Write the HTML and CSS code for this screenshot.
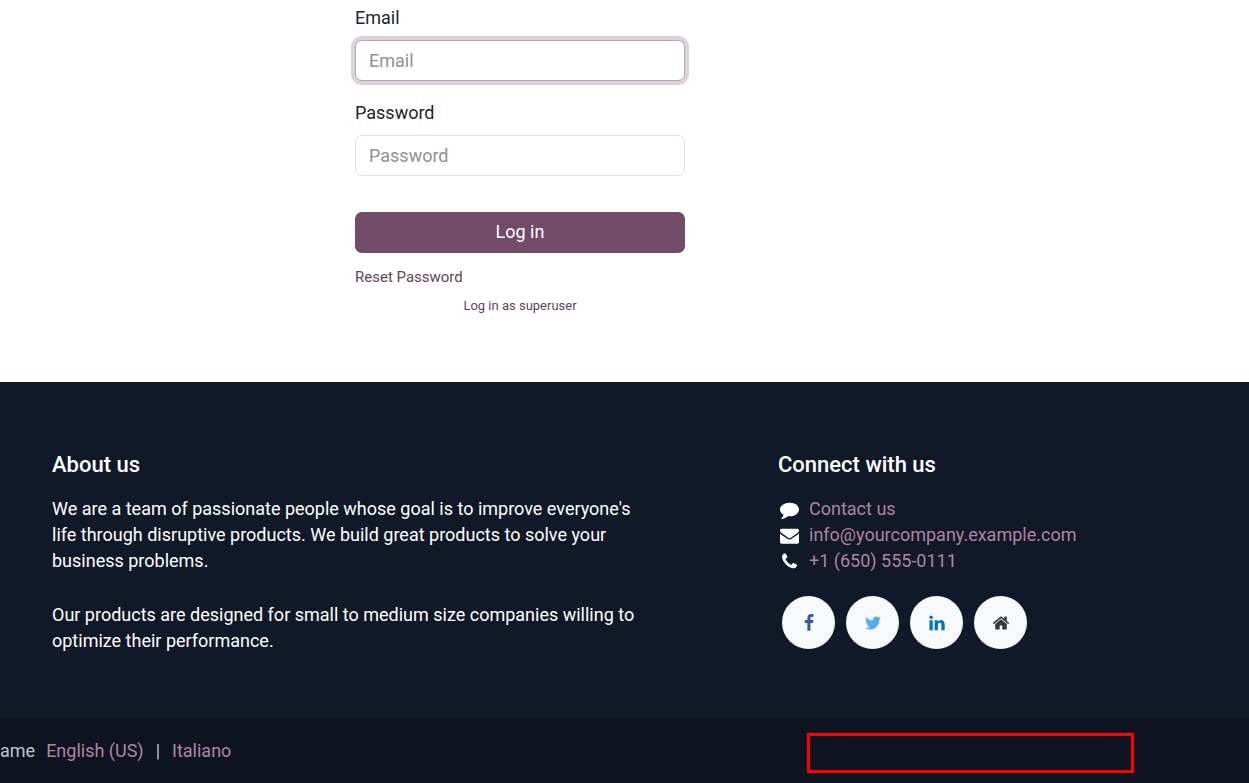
FILE: index.html
```html
<!DOCTYPE html>
<html lang="en">
<head>
<meta charset="utf-8">
<meta name="viewport" content="width=device-width, initial-scale=1">
<title>Login</title>
<link rel="stylesheet" href="styles.css">
</head>
<body>
<main class="login">
  <form class="login-form">
    <div class="field">
      <label for="email">Email</label>
      <input class="control" id="email" type="email" placeholder="Email" autofocus>
    </div>
    <div class="field">
      <label for="password">Password</label>
      <input class="control" id="password" type="password" placeholder="Password">
    </div>
    <button class="submit" type="submit">Log in</button>
    <a class="reset" href="#">Reset Password</a>
    <a class="superuser" href="#">Log in as superuser</a>
  </form>
</main>
<footer class="footer">
  <div class="footer-main">
    <section class="about">
      <h2>About us</h2>
      <p>We are a team of passionate people whose goal is to improve everyone's life through disruptive products. We build great products to solve your business problems.</p>
      <p>Our products are designed for small to medium size companies willing to optimize their performance.</p>
    </section>
    <section class="connect">
      <h2>Connect with us</h2>
      <ul class="contacts">
        <li><svg class="icon" viewBox="0 0 1792 1792" aria-hidden="true"><path d="M1792 896q0 174-120 321.5t-326 233-450 85.5q-70 0-145-8-198 175-460 242-49 14-114 22-17 2-30.5-9t-17.5-29v-1q-3-4-.5-12t2-10 4.5-9.5l6-9 7-8.5 8-9q7-8 31-34.5t34.5-38 31-39.5 32.5-51 27-59 26-76q-157-89-247.5-220t-90.5-281q0-130 71-248.5t191-204.5 286-136.5 348-50.5q244 0 450 85.5t326 233 120 321.5z"/></svg><a href="#">Contact us</a></li>
        <li><svg class="icon" viewBox="0 0 1792 1792" aria-hidden="true"><path d="M1792 710v794q0 66-47 113t-113 47h-1472q-66 0-113-47t-47-113v-794q44 49 101 87 362 246 497 345 57 42 92.5 65.5t94.5 48 110 24.5h2q51 0 110-24.5t94.5-48 92.5-65.5q170-123 498-345 57-39 100-87zm0-294q0 79-49 151t-122 123q-376 261-468 325-10 7-42.5 31t-54 38.5-52 32.5-57.5 27-50 9h-2q-23 0-50-9t-57.5-27-52-32.5-54-38.5-42.5-31q-91-64-262-182.5t-205-142.5q-62-42-117-115.5t-55-136.5q0-78 41.5-130t118.5-52h1472q65 0 112.5 47t47.5 113z"/></svg><a href="#">info@yourcompany.example.com</a></li>
        <li><svg class="icon" viewBox="0 0 1792 1792" aria-hidden="true"><path d="M1600 1240q0 27-10 70.5t-21 68.5q-21 50-122 106-94 51-186 51-27 0-53-3.5t-57.5-12.5-47-14.5-55.5-20.5-49-18q-98-35-175-83-127-79-264-216t-216-264q-48-77-83-175-3-9-18-49t-20.5-55.5-14.5-47-12.5-57.5-3.5-53q0-92 51-186 56-101 106-122 25-11 68.5-21t70.5-10q14 0 21 3 18 6 53 76 11 19 30 54t35 63.5 31 53.5q3 4 17.5 25t21.5 35.5 7 28.5q0 20-28.5 50t-62 55-62 53-28.5 46q0 9 5 22.5t8.5 20.5 14 24 11.5 19q76 137 174 235t235 174q2 1 19 11.5t24 14 20.5 8.5 22.5 5q18 0 46-28.5t53-62 55-62 50-28.5q14 0 28.5 7t35.5 21.5 25 17.5q25 15 53.5 31t63.5 35 54 30q70 35 76 53 3 7 3 21z"/></svg><a href="#">+1 (650) 555-0111</a></li>
      </ul>
      <div class="social">
        <a class="facebook" href="#" aria-label="Facebook"><svg class="icon" viewBox="0 0 1792 1792"><path d="M1343 12v264h-157q-86 0-116 36t-30 108v189h293l-39 296h-254v759h-306v-759h-255v-296h255v-218q0-186 104-288.5t277-102.5q147 0 228 12z"/></svg></a>
        <a class="twitter" href="#" aria-label="Twitter"><svg class="icon" viewBox="0 0 1792 1792"><path d="M1684 408q-67 98-162 167 1 14 1 42 0 130-38 259.5t-115.5 248.5-184.5 210.5-258 146-323 54.5q-271 0-496-145 35 4 78 4 225 0 401-138-105-2-188-64.5t-114-159.5q33 5 61 5 43 0 85-11-112-23-185.5-111.5t-73.5-205.5v-4q68 38 146 41-66-44-105-115t-39-154q0-88 44-163 121 149 294.5 238.5t371.5 99.5q-8-38-8-74 0-134 94.5-228.5t228.5-94.5q140 0 236 102 109-21 205-78-37 115-142 178 93-10 186-50z"/></svg></a>
        <a class="linkedin" href="#" aria-label="LinkedIn"><svg class="icon" viewBox="0 0 1792 1792"><path d="M477 625v991h-330v-991h330zm21-306q1 73-50.5 122t-135.5 49h-2q-82 0-132-49t-50-122q0-74 51.5-122.5t134.5-48.5 133 48.5 51 122.5zm1166 729v568h-329v-530q0-105-40.5-164.5t-126.5-59.5q-63 0-105.5 34.5t-63.5 85.5q-11 30-11 81v553h-329q2-399 2-647t-1-296l-1-48h329v144h-2q20-32 41-56t56.5-52 87-43.5 114.5-15.5q171 0 275 113.5t104 332.5z"/></svg></a>
        <a class="home" href="#" aria-label="Home"><svg class="icon" viewBox="0 0 1792 1792"><path d="M1472 992v480q0 26-19 45t-45 19h-384v-384h-256v384h-384q-26 0-45-19t-19-45v-480q0-1 .5-3t.5-3l575-474 575 474q1 2 1 6zm223-69l-62 74q-8 9-21 11h-3q-13 0-21-7l-692-577-692 577q-12 8-24 7-13-2-21-11l-62-74q-8-10-7-23.5t11-21.5l719-599q32-26 76-26t76 26l244 204v-195q0-14 9-23t23-9h192q14 0 23 9t9 23v408l219 182q10 8 11 21.5t-7 23.5z"/></svg></a>
      </div>
    </section>
  </div>
  <div class="footer-bar">
    <span class="copyright">ame</span>
    <nav class="languages" aria-label="Languages">
      <a href="#">English (US)</a><span>|</span><a href="#">Italiano</a>
    </nav>
    <div class="highlight"></div>
  </div>
</footer>
</body>
</html>
```
FILE: styles.css
```css
* {
  box-sizing: border-box;
}

body {
  display: flex;
  flex-direction: column;
  min-height: 100vh;
  margin: 0;
  overflow-x: hidden;
  background: #fff;
  color: #212529;
  font: 18px/26px Roboto, sans-serif;
}

a {
  text-decoration: none;
}

.icon {
  display: block;
  fill: currentColor;
}

.login {
  padding: 5px 209px 66px 0;
}

.login-form {
  display: flex;
  flex-direction: column;
  width: 330px;
  margin: 0 auto;
}

.field {
  display: flex;
  flex-direction: column;
  gap: 9px;
  margin-bottom: 19px;
}

.control {
  width: 100%;
  height: 41px;
  padding: 0 13px 1px;
  border: 1px solid #dee2e6;
  border-radius: 7px;
  background: #fff;
  color: #212529;
  font: inherit;
}

.control::placeholder {
  color: #8f9193;
  opacity: 1;
}

.control:focus {
  border-color: #b9a6b4;
  outline: 0;
  box-shadow: 0 0 0 4px #dcd2d9;
}

.submit {
  height: 41px;
  margin-top: 17px;
  padding: 0 0 2px;
  border: 0;
  border-radius: 7px;
  background: #714b67;
  color: #fff;
  font: inherit;
}

.reset,
.superuser {
  color: #64435b;
}

.reset {
  align-self: flex-start;
  margin-top: 12px;
  font-size: 15px;
  line-height: 24px;
}

.superuser {
  align-self: center;
  margin-top: 7px;
  font-size: 13px;
  line-height: 20px;
}

.footer {
  display: flex;
  flex: 1;
  flex-direction: column;
  background: #111827;
  color: #fff;
}

.footer-main {
  display: grid;
  grid-template-columns: 726fr 471fr;
  padding: 70px 0 63px 52px;
}

.footer h2 {
  margin: 0 0 18px;
  font-size: 22px;
  font-weight: 500;
  line-height: 26px;
}

.about {
  padding-right: 130px;
}

.about p {
  margin: 0 0 28px;
}

.about p:last-child {
  margin-bottom: 0;
}

.contacts {
  margin: 0;
  padding: 0;
  list-style: none;
}

.contacts li {
  display: flex;
  align-items: center;
  gap: 10px;
  padding-left: 2px;
}

.contacts .icon {
  width: 19px;
  height: 19px;
}

.contacts a,
.languages a {
  color: #b083a5;
}

.social {
  display: flex;
  gap: 11px;
  margin-top: 22px;
  padding-left: 4px;
}

.social a {
  display: grid;
  place-items: center;
  width: 53px;
  height: 53px;
  border-radius: 50%;
  background: #f8f9fa;
}

.social .icon {
  width: 18px;
  height: 18px;
}

.facebook {
  color: #3b5998;
}

.twitter {
  color: #55acee;
}

.linkedin {
  color: #0077b5;
}

.home {
  color: #343a40;
}

.footer-bar {
  display: flex;
  flex: 1;
  align-items: center;
  min-height: 67px;
  background: #0e141f;
}

.copyright {
  color: #c3c4c7;
}

.languages {
  display: flex;
  gap: 12px;
  margin-left: 11px;
  color: #c3c4c7;
}

.highlight {
  width: 327px;
  height: 40px;
  margin: 4px 115px 0 auto;
  border: 3px solid #f00;
}
```
